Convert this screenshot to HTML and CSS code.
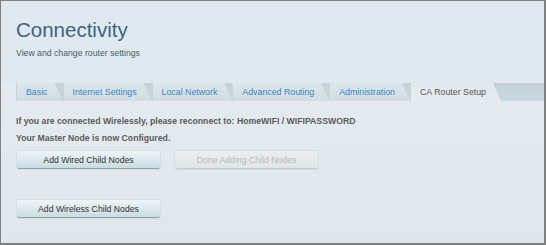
FILE: index.html
```html
<!DOCTYPE html>
<html lang="en">
<head>
    <meta charset="UTF-8">
    <meta name="viewport" content="width=device-width, initial-scale=1.0">
    <title>Connectivity</title>
    <link rel="stylesheet" href="styles.css">
</head>
<body>
    <div class="frame">
        <header class="page-head">
            <h1>Connectivity</h1>
            <p class="subtitle">View and change router settings</p>
        </header>

        <nav class="tabs">
            <a class="tab">Basic</a>
            <a class="tab">Internet Settings</a>
            <a class="tab">Local Network</a>
            <a class="tab">Advanced Routing</a>
            <a class="tab">Administration</a>
            <a class="tab active">CA Router Setup</a>
        </nav>

        <section class="panel">
            <p class="note">If you are connected Wirelessly, please reconnect to: HomeWIFI / WIFIPASSWORD</p>
            <p class="note">Your Master Node is now Configured.</p>
            <div class="btn-row">
                <button class="btn">Add Wired Child Nodes</button>
                <button class="btn" disabled>Done Adding Child Nodes</button>
            </div>
            <div class="btn-row wireless">
                <button class="btn">Add Wireless Child Nodes</button>
            </div>
        </section>
    </div>
</body>
</html>
```

FILE: styles.css
```css
body {
    margin: 0;
    font-family: "Liberation Sans", Arial, sans-serif;
}
.frame {
    box-sizing: border-box;
    width: 546px;
    height: 245px;
    border-style: solid;
    border-color: #808080;
    border-width: 1px 2px 2px 1px;
    background: linear-gradient(#e6ecf0, #e1e8ed);
    display: flex;
    flex-direction: column;
}
.page-head {
    background-color: #dfe9ef;
    padding: 17px 15px 0;
    height: 82px;
    box-sizing: border-box;
}
h1 {
    margin: 0;
    font-size: 20.5px;
    line-height: 23px;
    font-weight: normal;
    color: #3b6480;
}
.subtitle {
    margin: 6px 0 0;
    font-size: 8.7px;
    line-height: 12px;
    color: #4d5c67;
}
.tabs {
    display: flex;
    height: 18px;
    margin-left: 15px;
    background: linear-gradient(#c3d1d9, #cbd7de);
}
.tab {
    padding: 1px 15px 0 10px;
    font-size: 8.8px;
    line-height: 17px;
    color: #3a85c4;
    background: linear-gradient(#dce6eb, #d2dde3);
    clip-path: polygon(0 0, calc(100% - 8px) 0, 100% 100%, 0 100%);
    box-shadow: inset 1px 0 0 #c8d4db;
    white-space: nowrap;
}
.tab.active {
    color: #555;
    background: linear-gradient(#e2eaee, #e6ecf0);
}
.panel {
    flex: 1;
    padding: 14px 15px 0;
}
.note {
    margin: 0 0 5px;
    font-size: 8.7px;
    line-height: 12px;
    font-weight: bold;
    color: #5b5b5b;
}
.btn-row {
    display: flex;
    gap: 14px;
    margin-top: 7px;
}
.btn-row.wireless {
    margin-top: 31px;
}
.btn {
    width: 143px;
    height: 18px;
    margin-left: 1px;
    padding: 0;
    border: none;
    border-bottom: 1px solid #8ea3ab;
    border-radius: 2px;
    background: linear-gradient(#eef5f7, #c9dce2);
    font-family: "Liberation Sans", Arial, sans-serif;
    font-size: 8.7px;
    color: #333;
    box-shadow: 0 0 0 1px #d3dfe4;
}
.btn:disabled {
    background: linear-gradient(#eaeef0, #dfe5e8);
    border-bottom-color: #c3cbcf;
    color: #b3bbbf;
}
```
